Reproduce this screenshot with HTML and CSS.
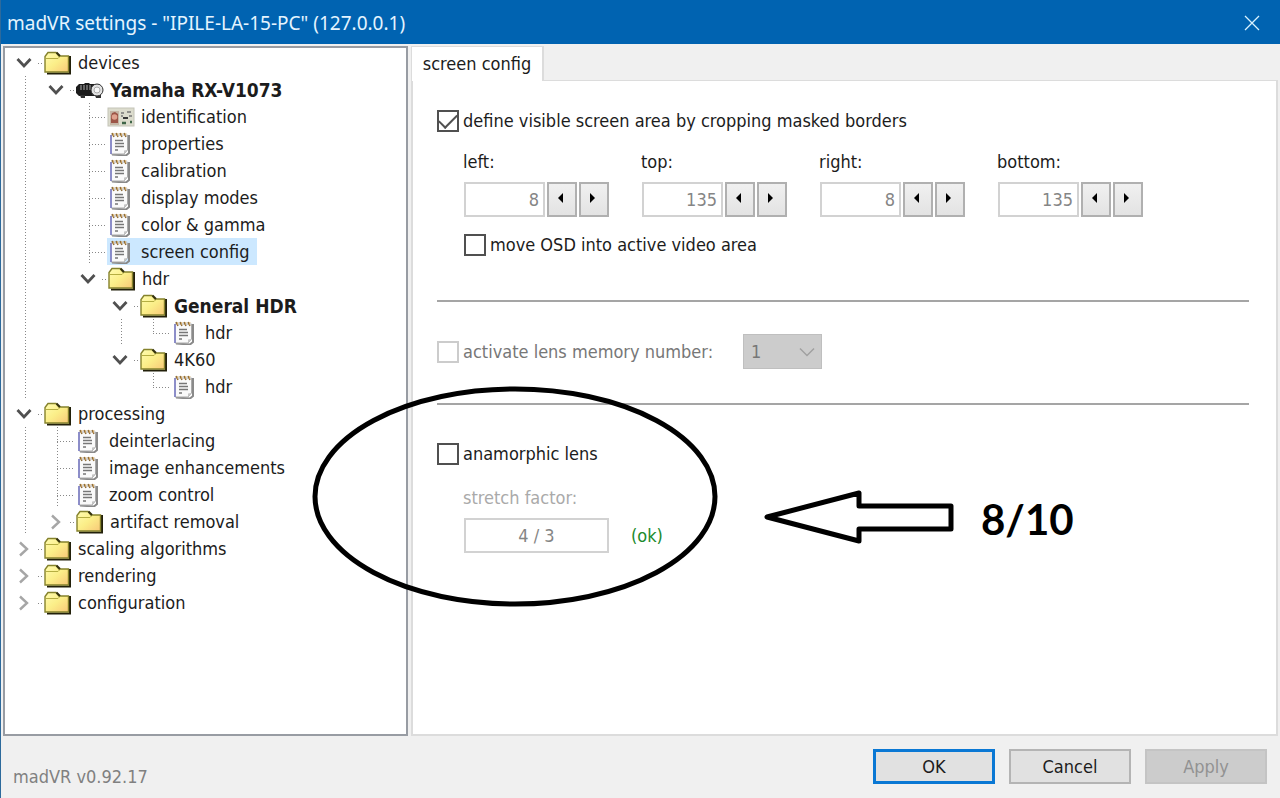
FILE: index.html
```html
<!DOCTYPE html>
<html lang="en">
<head>
    <meta charset="UTF-8">
    <meta name="viewport" content="width=device-width, initial-scale=1.0">
    <title>madVR settings</title>
    <link rel="stylesheet" href="styles.css">
</head>
<body>

<svg class="symbols" aria-hidden="true">
    <defs>
        <linearGradient id="folder-fill" x1="0" y1="0" x2="1" y2="1">
            <stop offset="0" stop-color="#fffcb0"/>
            <stop offset="0.5" stop-color="#fbee88"/>
            <stop offset="1" stop-color="#f8c878"/>
        </linearGradient>
    </defs>
    <symbol id="folder" viewBox="0 0 28 24">
        <path d="M3 22.500H26V6H23" fill="none" stroke="#22200a" stroke-width="2"/>
        <path d="M1 21V5.500L4 1.500H12L15 5H24.500V21Z" fill="url(#folder-fill)" stroke="#85822c" stroke-width="1.400"/>
        <path d="M2 7.500H14L16 5.500" fill="none" stroke="#b5ae42"/>
        <path d="M12.500 1.500L16 5" stroke="#33310f" stroke-width="2"/>
    </symbol>
    <symbol id="note" viewBox="0 0 28 24">
        <path d="M5 22.500L19 23.500L22 21V3" fill="none" stroke="#8a8a8a" stroke-width="2"/>
        <path d="M4 3H20.500V18L17 22H4Z" fill="#fafafa" stroke="#aaa"/>
        <path d="M4 3V22" stroke="#7476c4" stroke-width="1.500"/>
        <path d="M20.500 18L17 18.500V22Z" fill="#c4c4c4"/>
        <path d="M8 8.500H16M8 11.500H17M8 14.500H17M8 18H11" stroke="#777" stroke-width="1.400"/>
        <path d="M5 1L7 5M9 1L11 5M13 1L15 5M17 1L19 5" stroke="#8c6a35" stroke-width="1.500"/>
        <path d="M7 1L6 4M11 1L10 4M15 1L14 4M19 1L18 4" stroke="#d1a867"/>
    </symbol>
    <symbol id="card" viewBox="0 0 28 24">
        <rect x="1" y="3" width="26" height="18" fill="#dcdccd" stroke="#c4c4b8"/>
        <path d="M3 6H12V20H3Z" fill="#c5b5a5"/>
        <path d="M4 18V11L5 8L8 7L11 9V18Z" fill="#9c5547"/>
        <circle cx="7.500" cy="12" r="2.800" fill="#e0a28e"/>
        <path d="M14 8H17M20 7H24M14 11H16M22 11H25" stroke="#777" stroke-width="1.500"/>
        <path d="M16 13H21" stroke="#373737" stroke-width="2"/>
        <path d="M15 18H19M23 17H25" stroke="#3e6548" stroke-width="2.500"/>
    </symbol>
    <symbol id="projector" viewBox="0 0 28 24">
        <path d="M3 6H8L9 5H13L14 6H24V18H3L0 15V9Z" fill="#1c1c1c"/>
        <path d="M4 17H9V20H5ZM19 17H25V20H20Z" fill="#303030"/>
        <path d="M5 7V12M8 7V12M11 7V12M14 7V12" stroke="#8d8d8d" stroke-width="1.300"/>
        <circle cx="21" cy="12" r="6" fill="#e3e3e3" stroke="#333"/>
        <circle cx="21" cy="12" r="3" fill="#f7f7f7" stroke="#aaa"/>
    </symbol>
    <symbol id="open" viewBox="0 0 18 18">
        <path d="M2.500 5L9 12L15.500 5" fill="none" stroke="#505050" stroke-width="2.800"/>
    </symbol>
    <symbol id="closed" viewBox="0 0 18 18">
        <path d="M5 2.500L12 9L5 15.500" fill="none" stroke="#a6a6a6" stroke-width="2.400"/>
    </symbol>
    <symbol id="prev" viewBox="0 0 10 10">
        <path d="M7 0V10L2 5Z"/>
    </symbol>
    <symbol id="next" viewBox="0 0 10 10">
        <path d="M2 0V10L7 5Z"/>
    </symbol>
</svg>

<div class="window">
    <header class="titlebar">
        <h1>madVR settings - "IPILE-LA-15-PC" (127.0.0.1)</h1>
        <button class="close" aria-label="Close">
            <svg viewBox="0 0 16 16"><path d="M1 1L15 15M15 1L1 15" stroke="#d9f2ff" stroke-width="1.300"/></svg>
        </button>
    </header>

    <main class="body">
        <nav class="tree">
            <ul>
                <li>
                    <div class="row"><button class="toggle" aria-label="Collapse"><svg><use href="#open"/></svg></button><svg class="icon"><use href="#folder"/></svg><span>devices</span></div>
                    <ul class="more">
                        <li>
                            <div class="row bold"><button class="toggle" aria-label="Collapse"><svg><use href="#open"/></svg></button><svg class="icon"><use href="#projector"/></svg><span>Yamaha RX-V1073</span></div>
                            <ul>
                                <li class="row leaf"><svg class="icon"><use href="#card"/></svg><span>identification</span></li>
                                <li class="row leaf"><svg class="icon"><use href="#note"/></svg><span>properties</span></li>
                                <li class="row leaf"><svg class="icon"><use href="#note"/></svg><span>calibration</span></li>
                                <li class="row leaf"><svg class="icon"><use href="#note"/></svg><span>display modes</span></li>
                                <li class="row leaf"><svg class="icon"><use href="#note"/></svg><span>color &amp; gamma</span></li>
                                <li class="row leaf"><div class="selected"><svg class="icon"><use href="#note"/></svg><span>screen config</span></div></li>
                                <li>
                                    <div class="row"><button class="toggle" aria-label="Collapse"><svg><use href="#open"/></svg></button><svg class="icon"><use href="#folder"/></svg><span>hdr</span></div>
                                    <ul>
                                        <li>
                                            <div class="row bold"><button class="toggle" aria-label="Collapse"><svg><use href="#open"/></svg></button><svg class="icon"><use href="#folder"/></svg><span>General HDR</span></div>
                                            <ul class="more">
                                                <li class="row leaf"><svg class="icon"><use href="#note"/></svg><span>hdr</span></li>
                                            </ul>
                                        </li>
                                        <li>
                                            <div class="row"><button class="toggle" aria-label="Collapse"><svg><use href="#open"/></svg></button><svg class="icon"><use href="#folder"/></svg><span>4K60</span></div>
                                            <ul>
                                                <li class="row leaf"><svg class="icon"><use href="#note"/></svg><span>hdr</span></li>
                                            </ul>
                                        </li>
                                    </ul>
                                </li>
                            </ul>
                        </li>
                    </ul>
                </li>
                <li>
                    <div class="row"><button class="toggle" aria-label="Collapse"><svg><use href="#open"/></svg></button><svg class="icon"><use href="#folder"/></svg><span>processing</span></div>
                    <ul class="more">
                        <li class="row leaf"><svg class="icon"><use href="#note"/></svg><span>deinterlacing</span></li>
                        <li class="row leaf"><svg class="icon"><use href="#note"/></svg><span>image enhancements</span></li>
                        <li class="row leaf"><svg class="icon"><use href="#note"/></svg><span>zoom control</span></li>
                        <li class="row"><button class="toggle" aria-label="Expand"><svg><use href="#closed"/></svg></button><svg class="icon"><use href="#folder"/></svg><span>artifact removal</span></li>
                    </ul>
                </li>
                <li class="row"><button class="toggle" aria-label="Expand"><svg><use href="#closed"/></svg></button><svg class="icon"><use href="#folder"/></svg><span>scaling algorithms</span></li>
                <li class="row"><button class="toggle" aria-label="Expand"><svg><use href="#closed"/></svg></button><svg class="icon"><use href="#folder"/></svg><span>rendering</span></li>
                <li class="row"><button class="toggle" aria-label="Expand"><svg><use href="#closed"/></svg></button><svg class="icon"><use href="#folder"/></svg><span>configuration</span></li>
            </ul>
        </nav>

        <section class="content">
            <div class="tabs" role="tablist">
                <button class="tab" role="tab" aria-selected="true">screen config</button>
            </div>
            <form class="panel" id="settings">
                <label class="check"><input type="checkbox" checked>define visible screen area by cropping masked borders</label>
                <div class="borders">
                    <div class="field">
                        <label for="left">left:</label>
                        <div class="spin">
                            <input id="left" type="text" value="8" disabled>
                            <button type="button" aria-label="Decrease left"><svg><use href="#prev"/></svg></button>
                            <button type="button" aria-label="Increase left"><svg><use href="#next"/></svg></button>
                        </div>
                    </div>
                    <div class="field">
                        <label for="top">top:</label>
                        <div class="spin">
                            <input id="top" type="text" value="135" disabled>
                            <button type="button" aria-label="Decrease top"><svg><use href="#prev"/></svg></button>
                            <button type="button" aria-label="Increase top"><svg><use href="#next"/></svg></button>
                        </div>
                    </div>
                    <div class="field">
                        <label for="right">right:</label>
                        <div class="spin">
                            <input id="right" type="text" value="8" disabled>
                            <button type="button" aria-label="Decrease right"><svg><use href="#prev"/></svg></button>
                            <button type="button" aria-label="Increase right"><svg><use href="#next"/></svg></button>
                        </div>
                    </div>
                    <div class="field">
                        <label for="bottom">bottom:</label>
                        <div class="spin">
                            <input id="bottom" type="text" value="135" disabled>
                            <button type="button" aria-label="Decrease bottom"><svg><use href="#prev"/></svg></button>
                            <button type="button" aria-label="Increase bottom"><svg><use href="#next"/></svg></button>
                        </div>
                    </div>
                </div>
                <label class="check indent"><input type="checkbox">move OSD into active video area</label>

                <hr>

                <div class="memory">
                    <label class="check off"><input type="checkbox" disabled>activate lens memory number:</label>
                    <div class="select">
                        <select aria-label="Lens memory number" disabled><option>1</option></select>
                        <svg viewBox="0 0 16 10"><path d="M1 1.500L8 8.500L15 1.500" fill="none" stroke="#a0a0a0" stroke-width="1.500"/></svg>
                    </div>
                </div>

                <hr>

                <label class="check"><input type="checkbox">anamorphic lens</label>
                <div class="field stretch">
                    <label for="stretch">stretch factor:</label>
                    <div class="factor">
                        <input id="stretch" type="text" value="4 / 3" disabled>
                        <output for="stretch">(ok)</output>
                    </div>
                </div>
            </form>
        </section>
    </main>

    <footer class="footer">
        <span class="version">madVR v0.92.17</span>
        <button class="action primary">OK</button>
        <button class="action">Cancel</button>
        <button class="action" disabled>Apply</button>
    </footer>

    <!-- hand drawn marks on top of the dialog -->
    <svg class="marks" width="1280" height="798" viewBox="0 0 1280 798">
        <ellipse cx="515" cy="496.500" rx="200" ry="107.500"/>
        <path d="M767 517L859 493V506H951V529H859V541Z"/>
        <text x="981" y="535">8/10</text>
    </svg>
</div>

</body>
</html>
```

FILE: styles.css
```css
* {
    box-sizing: border-box;
}

body {
    margin: 0;
    background: #f0f0f0;
    color: #1c1c1c;
    font-family: "DejaVu Sans Condensed", "Noto Sans", sans-serif;
    font-size: 18px;
    line-height: 24px;
}

button, input, select {
    font: inherit;
    color: inherit;
    margin: 0;
}

button {
    padding: 0;
}

.symbols {
    position: absolute;
    width: 0;
    height: 0;
}

.window {
    position: relative;
    display: flex;
    flex-direction: column;
    min-height: 100vh;
    border-left: 1px solid #2d6a9c;
}

.titlebar {
    display: flex;
    align-items: center;
    justify-content: space-between;
    height: 44px;
    padding: 2px 20px 0 6px;
    background: #0063b1;
    color: #e4f4ff;
}

.titlebar h1 {
    margin: 0;
    font-family: "Noto Sans", sans-serif;
    font-size: 19px;
    font-weight: 400;
}

.close {
    display: flex;
    border: none;
    background: none;
}

.close svg {
    width: 16px;
    height: 16px;
}

.body {
    display: flex;
    flex: 1;
    gap: 3px;
    padding: 2px 2px 0;
}

/* tree */
.tree {
    flex: 0 0 405px;
    padding: 1px 0;
    background: #fff;
    border: 2px solid #989ca3;
}

.tree ul {
    margin: 0;
    padding: 0;
    list-style: none;
}

.tree ul ul {
    padding-left: 32px;
}

.tree .more {
    background: repeating-linear-gradient(#888 0 1px, transparent 1px 3px) 20px 0 / 1px 100% no-repeat;
}

.row {
    display: flex;
    align-items: center;
    height: 27px;
    background: repeating-linear-gradient(90deg, #888 0 1px, transparent 1px 3px) 33px 14px / 6px 1px no-repeat;
    white-space: nowrap;
}

.row .icon {
    width: 28px;
    height: 24px;
    margin-right: 6px;
}

.bold {
    font-size: 19px;
    font-weight: 700;
}

.toggle {
    display: flex;
    width: 18px;
    height: 18px;
    margin: 0 11px 0 10px;
    border: none;
    background: none;
}

.toggle svg {
    width: 18px;
    height: 18px;
}

.leaf {
    padding-left: 38px;
    background:
        repeating-linear-gradient(#888 0 1px, transparent 1px 3px) 20px 0 / 1px 100% no-repeat,
        repeating-linear-gradient(90deg, #888 0 1px, transparent 1px 3px) 20px 14px / 18px 1px no-repeat;
}

.leaf:only-child {
    background-size: 1px 14px, 18px 1px;
}

.selected {
    display: flex;
    align-items: center;
    height: 27px;
    padding-right: 7px;
    background: #cce8ff;
}

/* right side */
.content {
    display: flex;
    flex: 1;
    flex-direction: column;
}

.tabs {
    display: flex;
    height: 34px;
}

.tab {
    width: 133px;
    height: 35px;
    background: #fff;
    border: 2px solid #dcdcdc;
    border-width: 1px 2px 0 1px;
    z-index: 1;
}

.panel {
    flex: 1;
    padding: 28px 27px 0 24px;
    background: #fff;
    border: 2px solid #dcdcdc;
    border-width: 1px 2px 2px;
}

.check {
    display: flex;
    align-items: center;
    gap: 4px;
    height: 24px;
}

.check input {
    display: grid;
    place-content: center;
    width: 22px;
    height: 22px;
    appearance: none;
    background: #fff;
    border: 2px solid #505050;
}

.check input:checked::before {
    content: "";
    width: 16px;
    height: 8px;
    margin-bottom: 5px;
    border: solid #505050;
    border-width: 0 0 2px 2px;
    transform: rotate(-45deg);
}

.check input:disabled {
    border-color: #ccc;
}

.off {
    color: #777;
}

.borders {
    display: grid;
    grid-template-columns: repeat(4, 145px);
    gap: 33px;
    margin: 17px 0 16px 27px;
}

.field {
    display: flex;
    flex-direction: column;
    gap: 8px;
}

.field label {
    margin-left: -1px;
}

.field input {
    height: 35px;
    padding: 0 4px;
    background: #fff;
    border: 2px solid #d2d2d2;
    color: #858585;
}

.spin {
    display: flex;
    gap: 2px;
}

.spin input {
    width: 81px;
    text-align: right;
}

.spin button {
    display: grid;
    place-content: center;
    width: 30px;
    height: 35px;
    background: linear-gradient(#f0f0f0, #e3e3e3);
    border: 2px solid #b0b0b0;
}

.spin svg {
    width: 10px;
    height: 10px;
    margin: 0 2px 4px 0;
}

.indent {
    margin-left: 27px;
}

hr {
    height: 2px;
    margin: 43px 0 32px;
    background: #a5a5a5;
    border: none;
}

.memory {
    display: flex;
    gap: 30px;
    align-items: center;
}

.memory + hr {
    margin: 34px 0 37px;
}

.select {
    position: relative;
    width: 79px;
}

.select select {
    display: block;
    width: 100%;
    height: 35px;
    padding: 0 7px;
    appearance: none;
    background: #ccc;
    border: 1px solid #bfbfbf;
    border-radius: 0;
    color: #777;
    opacity: 1;
}

.select svg {
    position: absolute;
    top: 13px;
    right: 7px;
    width: 16px;
    height: 10px;
}

.stretch {
    margin: 20px 0 0 27px;
    color: #aaa;
}

.factor {
    display: flex;
    gap: 22px;
    align-items: center;
}

.factor input {
    width: 145px;
    text-align: center;
}

.factor output {
    color: #208a2c;
}

/* bottom bar */
.footer {
    display: flex;
    gap: 14px;
    height: 62px;
    padding: 13px 13px 0 12px;
}

.version {
    flex: 1;
    margin-top: 16px;
    color: #808080;
}

.action {
    width: 122px;
    height: 35px;
    background: #e1e1e1;
    border: 2px solid #b4b4b4;
}

.primary {
    border: 3px solid #0a78d4;
}

.action:disabled {
    background: #ccc;
    border-color: #c4c4c4;
    color: #929292;
}

.marks {
    position: absolute;
    top: 0;
    left: -1px;
    fill: none;
    stroke: #000;
    stroke-width: 5;
    stroke-linejoin: round;
    pointer-events: none;
}

.marks text {
    fill: #000;
    stroke: none;
    font-family: Lato, sans-serif;
    font-size: 42px;
    font-weight: 700;
}
```
